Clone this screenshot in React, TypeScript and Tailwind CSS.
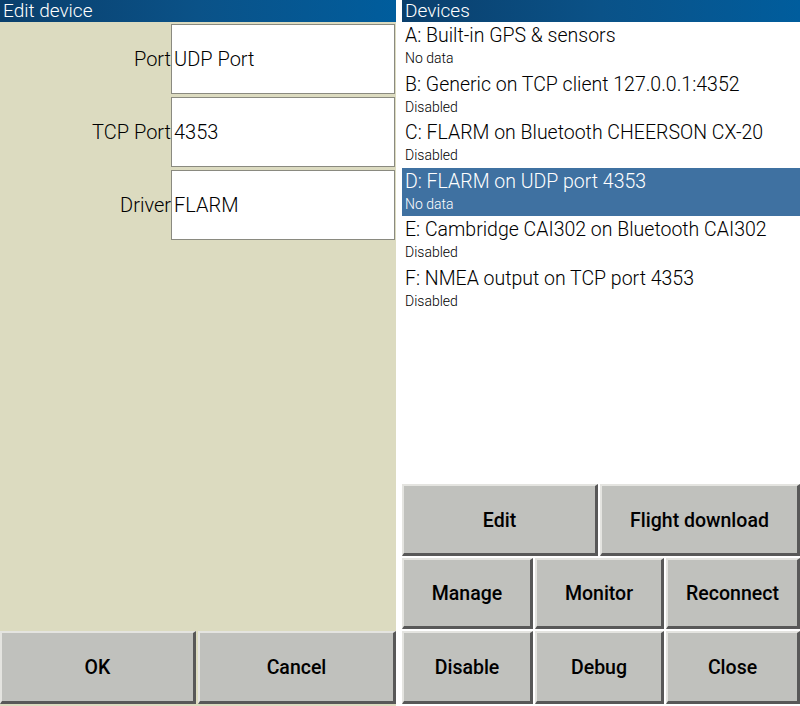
const devices = [
  { title: "A: Built-in GPS & sensors", status: "No data" },
  { title: "B: Generic on TCP client 127.0.0.1:4352", status: "Disabled" },
  { title: "C: FLARM on Bluetooth CHEERSON CX-20", status: "Disabled" },
  { title: "D: FLARM on UDP port 4353", status: "No data", selected: true },
  { title: "E: Cambridge CAI302 on Bluetooth CAI302", status: "Disabled" },
  { title: "F: NMEA output on TCP port 4353", status: "Disabled" },
];

const fields = [
  { label: "Port", value: "UDP Port" },
  { label: "TCP Port", value: "4353" },
  { label: "Driver", value: "FLARM" },
];

function TitleBar({ text }: { text: string }) {
  return (
    <div className="h-[22px] shrink-0 bg-gradient-to-r from-[#0a3f6c] via-[#0a5288] to-[#005d9d] px-[3px] text-[19px] leading-[22px] font-light text-white">
      {text}
    </div>
  );
}

function Button({ label }: { label: string }) {
  return (
    <button className="flex items-center justify-center border-t-2 border-l-2 border-b-[3px] border-r-[3px] border-t-[#e4e4e0] border-l-[#e4e4e0] border-b-[#585858] border-r-[#585858] bg-[#c0c1bd] pt-[2px] text-[19.5px] font-medium text-black">
      {label}
    </button>
  );
}

export default function App() {
  return (
    <div
      className="flex h-[706px] w-[800px] bg-white"
      style={{ fontFamily: "Roboto, 'Noto Sans', sans-serif" }}
    >
      <div className="flex w-[396px] flex-col bg-[#dcdbc0]">
        <TitleBar text="Edit device" />
        <div className="flex flex-col gap-[3px] pt-[2px]">
          {fields.map((f) => (
            <div key={f.label} className="flex h-[70px]">
              <div className="flex w-[171px] items-center justify-end text-[20px] font-light text-black">
                {f.label}
              </div>
              <div className="flex w-[224px] items-center border border-[#8a8a80] bg-white pl-[2px] text-[20px] font-light text-black">
                {f.value}
              </div>
            </div>
          ))}
        </div>
        <div className="flex-1" />
        <div className="mb-[2px] grid h-[73px] grid-cols-[196px_198px] gap-[2px]">
          <Button label="OK" />
          <Button label="Cancel" />
        </div>
      </div>
      <div className="ml-[6px] flex w-[398px] flex-col bg-white">
        <TitleBar text="Devices" />
        <div className="flex flex-col">
          {devices.map((d) => (
            <div
              key={d.title}
              className={`flex h-[48.5px] flex-col px-[3px] ${d.selected ? "bg-[#3f71a1] text-white" : "text-black"}`}
            >
              <div className="mt-[3px] text-[19.5px] leading-[22px] font-light">{d.title}</div>
              <div className="mt-[3px] text-[14px] leading-[17px] font-light">{d.status}</div>
            </div>
          ))}
        </div>
        <div className="flex-1" />
        <div className="mb-[2px] flex flex-col gap-[2px]">
          <div className="grid h-[72px] grid-cols-[196px_200px] gap-[2px]">
            <Button label="Edit" />
            <Button label="Flight download" />
          </div>
          <div className="grid h-[71px] grid-cols-[131px_129px_134px] gap-[2px]">
            <Button label="Manage" />
            <Button label="Monitor" />
            <Button label="Reconnect" />
          </div>
          <div className="grid h-[73px] grid-cols-[131px_129px_134px] gap-[2px]">
            <Button label="Disable" />
            <Button label="Debug" />
            <Button label="Close" />
          </div>
        </div>
      </div>
    </div>
  );
}
